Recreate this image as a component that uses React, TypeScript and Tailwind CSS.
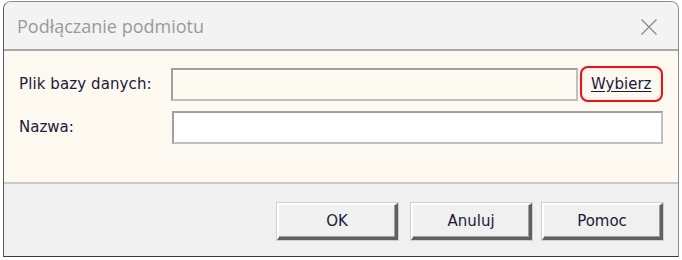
import React from "react";

export default function App() {
  const font = { fontFamily: "Tahoma, 'DejaVu Sans', 'Liberation Sans', sans-serif" };
  const buttons: [string, string][] = [
    ["OK", "mr-[13px]"],
    ["Anuluj", "mr-[10px]"],
    ["Pomoc", ""],
  ];
  return (
    <div className="w-[682px] h-[260px] bg-white relative overflow-hidden">
      <div className="absolute left-[3px] top-[1px] w-[676px] h-[256px] rounded-t-[8px] border border-[#8c8c8c] border-b-[#3a3a3a] border-l-[#5a5a5a] bg-[#f0f0f0] flex flex-col overflow-hidden">
        <div className="h-[47px] shrink-0 flex items-center justify-between pl-[13px] pr-[14px] bg-[#f3f3f3]">
          <span className="text-[18px] text-[#9a9a9a] pt-[2px]" style={{ fontFamily: "'Open Sans', 'Noto Sans', sans-serif" }}>Podłączanie podmiotu</span>
          <svg width="18" height="18" viewBox="0 0 18 18" className="mr-[6px] mt-[2px]">
            <path d="M1.5 1.5 L16.5 16.5 M16.5 1.5 L1.5 16.5" stroke="#8a8a8a" strokeWidth="1.3" />
          </svg>
        </div>
        <div className="h-[135px] shrink-0 border-t-2 border-b-2 border-[#a8a8a8] border-b-[#c8c8c8] bg-[#fdf9f0] pt-[16px] px-[15px] flex flex-col gap-[9px]" style={font}>
          <div className="flex items-center h-[34px]">
            <span className="w-[153px] text-[15px] tracking-[0.1px] text-[#1a1a3a]">Plik bazy danych:</span>
            <div className="w-[409px] h-[33px] border-2 border-[#a0a0a0] border-b-[#c0c0c0] border-r-[#c0c0c0] bg-[#fdfaf2]" />
            <div className="ml-[2px] w-[84px] h-[36px] rounded-[8px] border-2 border-[#e3141b] flex items-center justify-center shadow-[inset_0_0_3px_rgba(0,0,0,0.15)]">
              <span className="text-[15px] text-[#1a1a3a] underline underline-offset-[2px]">Wybierz</span>
            </div>
          </div>
          <div className="flex items-center h-[34px]">
            <span className="w-[153px] text-[15px] text-[#1a1a3a]">Nazwa:</span>
            <div className="w-[492px] h-[33px] border-2 border-[#a0a0a0] border-b-[#c0c0c0] border-r-[#c0c0c0] bg-white" />
          </div>
        </div>
        <div className="flex-1 flex justify-end items-start pt-[19px] pr-[15px]" style={font}>
          {buttons.map(([t, m]) => (
            <div
              key={t}
              className={`${m} w-[121px] h-[37px] bg-[#f0f0f0] border-t-2 border-l-2 border-white border-r-[3px] border-b-[3px] border-r-[#606060] border-b-[#606060] shadow-[inset_-1px_-1px_0_#a0a0a0,0_0_0_1px_#d0d0d0] flex items-center justify-center text-[15px] text-[#1a1a3a]`}
            >
              {t}
            </div>
          ))}
        </div>
      </div>
    </div>
  );
}
